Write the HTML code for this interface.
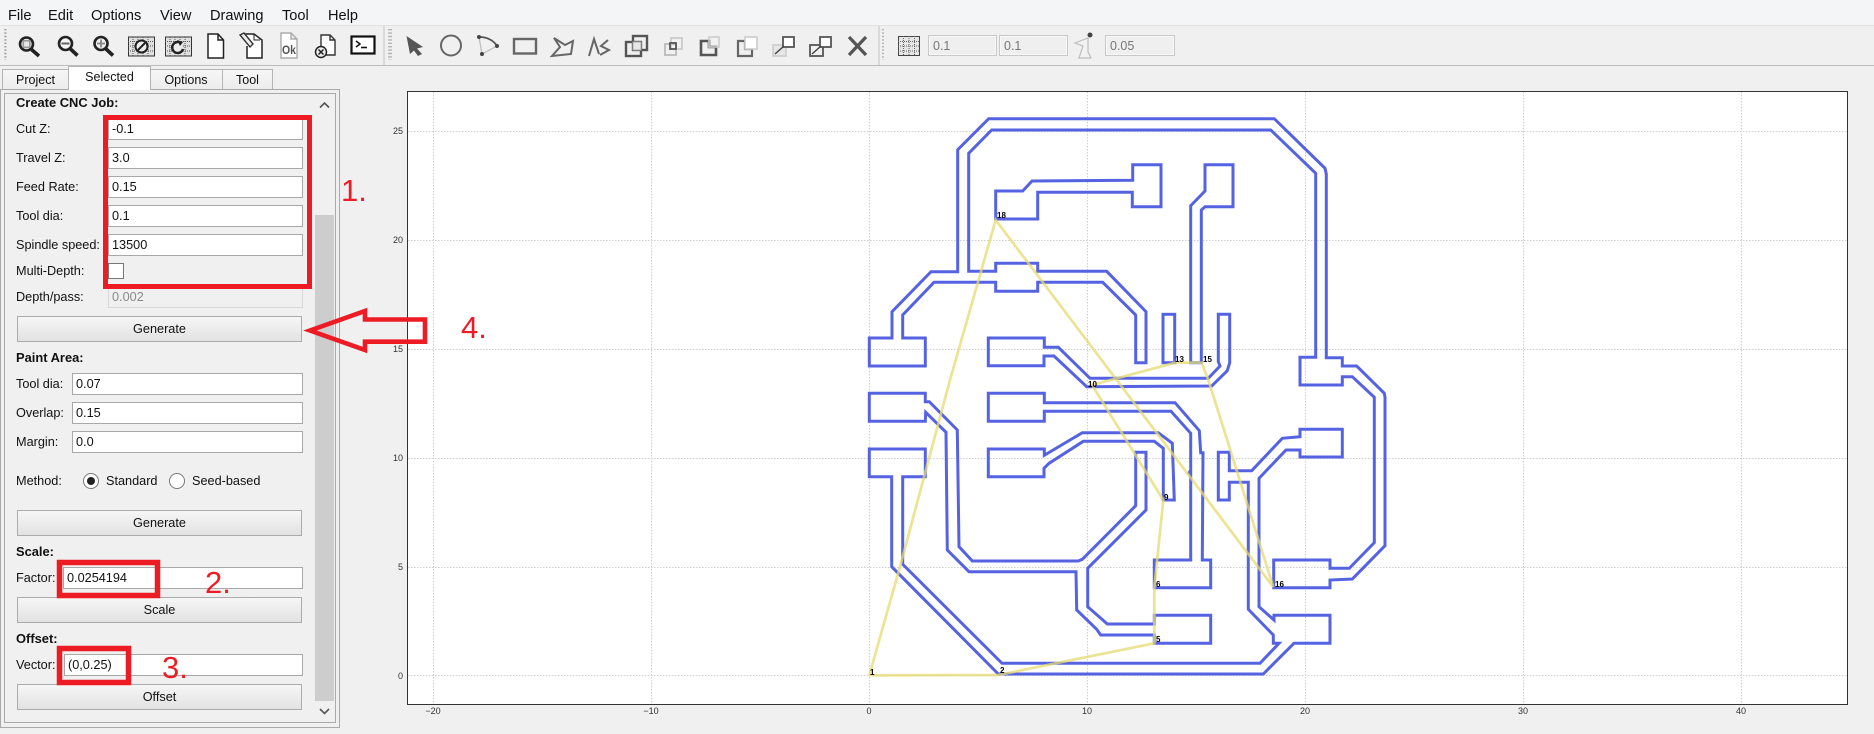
<!DOCTYPE html>
<html><head><meta charset="utf-8"><title>FlatCAM</title>
<style>
html,body{margin:0;padding:0;width:1874px;height:734px;overflow:hidden;background:#f0f0f0;font-family:"Liberation Sans",sans-serif;color:#1e1e1e}
div{position:absolute;box-sizing:border-box;white-space:nowrap}
svg{position:absolute;left:0;top:0}
.m{top:7px;height:18px;line-height:18px;font-size:14.6px;color:#111}
.l{left:16px;height:16px;line-height:16px;font-size:12.7px;color:#111}
.b{left:16px;height:16px;line-height:16px;font-size:12.9px;font-weight:bold;color:#111}
.i{background:#fff;border:1px solid #a8a8a8;height:22px;right:auto;padding-left:3px;line-height:20px;font-size:12.7px;color:#111}
.btn{left:17px;width:285px;height:26px;border:1px solid #ababab;background:linear-gradient(#f6f6f6,#e2e2e2);text-align:center;line-height:24px;font-size:12.7px;color:#111}
.tab{top:69px;height:21px;border:1px solid #b4b4b4;border-bottom:1px solid #b4b4b4;background:linear-gradient(#f6f6f6,#ececec);text-align:center;line-height:20px;font-size:12.5px;color:#111}
.r{color:#ed1c24;font-size:31px;line-height:34px;height:34px}
.tb{background:#efefef;border:1px solid #c8c8c8;outline:1px solid #f8f8f8;outline-offset:-2px;height:21px;top:35px;padding-left:4px;line-height:20px;font-size:12.5px;color:#777}
.ty{left:380px;width:23px;text-align:right;font:9px/12px "Liberation Sans",sans-serif;color:#333;height:12px}
.tx{top:705px;width:40px;text-align:center;font:9px/12px "Liberation Sans",sans-serif;color:#333;height:12px}
.n{font:bold 8px/9px "Liberation Sans",sans-serif;color:#000;height:9px}
</style></head><body>

<div style="left:0;top:0;width:1874px;height:25px;background:#f4f5f7"></div>
<div style="left:0;top:25px;width:1874px;height:1px;background:#dfe0e2"></div>
<div style="left:0;top:26px;width:1874px;height:39px;background:#f0f0f0"></div>
<div style="left:0;top:65px;width:1874px;height:1px;background:#bdbdbd"></div>

<div class="m" style="left:8px">File</div>
<div class="m" style="left:48px">Edit</div>
<div class="m" style="left:91px">Options</div>
<div class="m" style="left:160px">View</div>
<div class="m" style="left:210px">Drawing</div>
<div class="m" style="left:282px">Tool</div>
<div class="m" style="left:328px">Help</div>

<!-- toolbar icons -->
<svg width="1874" height="66" viewBox="0 0 1874 66" fill="none">
 <g stroke="#9a9a9a" stroke-width="1.4" stroke-dasharray="1.4 2">
  <path d="M5 29V60M5.8 29V60"/><path d="M389 29V60M391 29V60"/><path d="M883 29V60"/>
 </g>
 <path d="M384 26V65M879 26V65" stroke="#c4c4c4"/>
 <!-- magnifiers -->
 <g stroke="#222">
  <circle cx="26.5" cy="44" r="6.5" stroke-width="2.6" fill="#e8e8e8"/><rect x="23.3" y="40.8" width="6.5" height="6.5" stroke="#999" stroke-width="1.6"/><path d="M31.5 49.5L39 56" stroke-width="3.6"/>
  <circle cx="65.5" cy="43.5" r="6.5" stroke-width="2.6" fill="#f5f5f5"/><path d="M61.5 43.5H69.5" stroke="#666" stroke-width="2"/><path d="M70.5 49L77.5 55.5" stroke-width="3.6"/>
  <circle cx="101" cy="43.5" r="6.5" stroke-width="2.6" fill="#eee"/><path d="M97 43.5H105M101 39.5V47.5" stroke="#888" stroke-width="1.8"/><path d="M106 49L113 55.5" stroke-width="3.6"/>
 </g>
 <!-- grid squares -->
 <g>
  <rect x="128.5" y="37" width="26" height="19" fill="#e0e0e0" stroke="#333"/>
  <path d="M133 37V56M138 37V56M143 37V56M148 37V56M128 41.5H154M128 46H154M128 51H154" stroke="#555" stroke-dasharray="1 1"/>
  <circle cx="141.5" cy="46.5" r="6" fill="#eee" stroke="#222" stroke-width="2"/><path d="M138 50L145 43" stroke="#222" stroke-width="2"/>
  <rect x="165.5" y="37" width="26" height="19" fill="#e0e0e0" stroke="#333"/>
  <path d="M170 37V56M175 37V56M180 37V56M185 37V56M165 41.5H191M165 46H191M165 51H191" stroke="#555" stroke-dasharray="1 1"/>
  <path d="M181.5 43.5A5.5 5.5 0 1 0 183 49" stroke="#222" stroke-width="2.4" fill="#eee"/><path d="M177 40L183 42L180 46" fill="#222"/>
 </g>
 <!-- docs -->
 <path d="M208 34H218L223.5 40V58H208Z M218 34V40H223.5" stroke="#222" stroke-width="1.5" fill="#fff"/>
 <path d="M245 34H254L262 40V58H247V46" stroke="#222" stroke-width="1.5" fill="#fff"/><path d="M254 34V40H260" stroke="#222"/><path d="M240 35L244 33L253 44L250 47Z" stroke="#333" stroke-width="1.4" fill="#eee"/>
 <path d="M281 33H291L297 39V58H281Z M291 33V39H297" stroke="#aaa" stroke-width="1.4" fill="#fff"/><text x="282" y="54" font-family="Liberation Sans" font-weight="bold" font-size="12" fill="#555" textLength="14" lengthAdjust="spacingAndGlyphs">Ok</text>
 <path d="M321 35H330L335 40V55H321Z M330 35V40H335" stroke="#333" stroke-width="1.4" fill="#fff"/><circle cx="321" cy="52" r="5.5" stroke="#222" stroke-width="1.5" fill="#eee"/><path d="M318.5 49.5L323.5 54.5M323.5 49.5L318.5 54.5" stroke="#222" stroke-width="1.5"/>
 <rect x="351.5" y="36.5" width="23" height="17" stroke="#111" stroke-width="2.2" fill="#fff"/><path d="M356 41L360 44L356 47" stroke="#111" stroke-width="1.5"/><path d="M361 47.5H367" stroke="#111" stroke-width="1.6"/>
 <!-- draw tools -->
 <path d="M406.5 36L423 47L417 48.5L422 54L418 56L414 50.5L410 54Z" fill="#555"/>
 <circle cx="451" cy="45.5" r="10" stroke="#666" stroke-width="2"/>
 <path d="M479 37C488 37 494 41 497 46" stroke="#555" stroke-width="1.8"/><path d="M497 46L482 54L479 37" stroke="#bbb" stroke-width="1.2"/><g fill="#444"><circle cx="479" cy="37" r="2"/><circle cx="497" cy="46" r="2"/><circle cx="482" cy="54" r="2"/></g>
 <rect x="514" y="39" width="22" height="14.5" stroke="#666" stroke-width="2.4"/>
 <path d="M554 38L565 45L573 41L571 54L552 56L560 47Z" stroke="#666" stroke-width="2"/>
 <path d="M589 56L594 39L599 54M608 40L601 46L609 50L600 55" stroke="#666" stroke-width="2"/>
 <!-- boolean tools -->
 <g fill="none">
  <rect x="626" y="42" width="15" height="14" stroke="#555" stroke-width="2.4"/><rect x="633" y="36" width="14" height="14" stroke="#555" stroke-width="2.4"/><rect x="633" y="42" width="8" height="8" fill="#e8e8e8" stroke="#aaa"/>
  <rect x="665" y="44" width="11" height="11" stroke="#bbb" stroke-width="1.8"/><rect x="671" y="38" width="11" height="11" stroke="#ccc" stroke-width="1.8"/><rect x="670" y="43" width="6" height="6" stroke="#555" stroke-width="1.8"/>
  <path d="M701 41H709V47H716V55H701Z" stroke="#555" stroke-width="2.6"/><rect x="709" y="37" width="10" height="10" stroke="#ccc" stroke-width="1.6"/>
  <path d="M738 41H745V49H752V56H738Z" stroke="#666" stroke-width="2.2"/><rect x="745" y="37" width="12" height="12" fill="#fff" stroke="#ccc" stroke-width="1.6"/>
  <rect x="773" y="45" width="13" height="11" stroke="#ccc" stroke-width="1.6" fill="#e6e6e6"/><rect x="783" y="37" width="11" height="10" stroke="#555" stroke-width="1.8" fill="#fff"/><path d="M775 54L784 46" stroke="#444" stroke-width="1.5"/>
  <rect x="810" y="45" width="13" height="11" stroke="#555" stroke-width="1.8"/><rect x="820" y="37" width="11" height="10" stroke="#555" stroke-width="1.8" fill="#fff"/><path d="M812 54L821 46" stroke="#444" stroke-width="1.5"/>
  <path d="M849 37L866 55M866 37L849 55" stroke="#555" stroke-width="3.2"/>
 </g>
 <!-- grid icon -->
 <rect x="898.5" y="36.5" width="21" height="19" fill="#e6e6e6" stroke="#444"/>
 <path d="M903.5 36V56M909 36V56M914.5 36V56M898 41.5H920M898 46H920M898 51H920" stroke="#666" stroke-dasharray="1 1"/>
 <path d="M1075 43L1088 38V52L1091 58H1079L1083 46Z" stroke="#bdbdbd" stroke-width="1.2" fill="#f2f2f2"/><circle cx="1090" cy="35" r="2.5" fill="#444"/>
</svg>
<div class="tb" style="left:928px;width:69px">0.1</div>
<div class="tb" style="left:999px;width:69px">0.1</div>
<div class="tb" style="left:1105px;width:70px">0.05</div>

<!-- tabs -->
<div class="tab" style="left:2px;width:67px">Project</div>
<div class="tab" style="left:149px;width:74px">Options</div>
<div class="tab" style="left:222px;width:51px">Tool</div>
<div style="left:0;top:89px;width:340px;height:639px;border:1px solid #a9a9a9;background:#f0f0f0"></div>
<div class="tab" style="left:68px;width:83px;top:66px;height:24px;background:#fff;border-bottom:0;line-height:21px">Selected</div>
<div style="left:4px;top:93px;width:332px;height:630px;border:1px solid #a9a9a9;background:#f0f0f0"></div>

<!-- scrollbar -->
<div style="left:315px;top:94px;width:20px;height:628px;background:#f0f0f0"></div>
<div style="left:315px;top:215px;width:19px;height:486px;background:#cdcdcd"></div>
<svg width="340" height="734" fill="none" style="left:0;top:0">
 <path d="M320 107.5L324.5 103L329 107.5" stroke="#555" stroke-width="1.6"/>
 <path d="M320 709L324.5 713.5L329 709" stroke="#555" stroke-width="1.6"/>
</svg>

<!-- form -->
<div class="b" style="top:95px">Create CNC Job:</div>
<div class="l" style="top:121px">Cut Z:</div><div class="i" style="left:108px;top:118px;width:195px">-0.1</div>
<div class="l" style="top:150px">Travel Z:</div><div class="i" style="left:108px;top:147px;width:195px">3.0</div>
<div class="l" style="top:179px">Feed Rate:</div><div class="i" style="left:108px;top:176px;width:195px">0.15</div>
<div class="l" style="top:208px">Tool dia:</div><div class="i" style="left:108px;top:205px;width:195px">0.1</div>
<div class="l" style="top:237px">Spindle speed:</div><div class="i" style="left:108px;top:234px;width:195px">13500</div>
<div class="l" style="top:263px">Multi-Depth:</div><div style="left:108px;top:263px;width:16px;height:16px;background:#fff;border:1px solid #777"></div>
<div class="l" style="top:289px">Depth/pass:</div><div class="i" style="left:108px;top:286px;width:195px;background:#f0f0f0;border-color:#d8d8d8;color:#8a8a8a">0.002</div>
<div class="btn" style="top:316px">Generate</div>

<div class="b" style="top:350px">Paint Area:</div>
<div class="l" style="top:376px">Tool dia:</div><div class="i" style="left:72px;top:373px;width:231px">0.07</div>
<div class="l" style="top:405px">Overlap:</div><div class="i" style="left:72px;top:402px;width:231px">0.15</div>
<div class="l" style="top:434px">Margin:</div><div class="i" style="left:72px;top:431px;width:231px">0.0</div>
<div class="l" style="top:473px">Method:</div>
<div class="l" style="left:106px;top:473px">Standard</div>
<div class="l" style="left:192px;top:473px">Seed-based</div>
<svg width="200" height="500" style="left:0;top:0" fill="none">
 <circle cx="91" cy="481" r="7.5" fill="#fff" stroke="#777"/><circle cx="91" cy="481" r="4" fill="#222"/>
 <circle cx="177" cy="481" r="7.5" fill="#fff" stroke="#777"/>
</svg>
<div class="btn" style="top:510px">Generate</div>

<div class="b" style="top:544px">Scale:</div>
<div class="l" style="top:570px">Factor:</div><div class="i" style="left:63px;top:567px;width:240px">0.0254194</div>
<div class="btn" style="top:597px">Scale</div>

<div class="b" style="top:631px">Offset:</div>
<div class="l" style="top:657px">Vector:</div><div class="i" style="left:64px;top:654px;width:239px">(0,0.25)</div>
<div class="btn" style="top:684px">Offset</div>

<!-- plot -->
<div style="left:407px;top:91px;width:1441px;height:614px;background:#fff;border:1px solid #333"></div>
<svg width="1874" height="734" viewBox="0 0 1874 734" fill="none">
 <g stroke="#cfcfcf" stroke-dasharray="1.5 1.5">
  <path d="M433.5 92V704M651.5 92V704M869.5 92V704M1087.5 92V704M1305.5 92V704M1523.5 92V704M1741.5 92V704"/>
  <path d="M408 131.5H1847M408 240.5H1847M408 349.5H1847M408 458.5H1847M408 567.5H1847M408 675.5H1847"/>
 </g>
 <g stroke="#5563e2" stroke-width="3" stroke-linejoin="miter">
  <polygon points="892,338 892,311.7 931,271.7 957.7,271.7 957.7,149.7 988.7,118.7 1274.3,118.7 1325,168.3 1326.3,174 1326.3,357.7 1342.3,357.7 1342.3,366 1356.7,366 1384.3,393.3 1385,397 1385,545.7 1352.3,579 1330,580 1330,587.7 1273.7,587.7 1273.7,560 1330,560 1330,568.3 1349.3,568.3 1374.3,542.7 1374.3,397.3 1352.3,376.7 1342.3,376.7 1342.3,385 1300,385 1300,357.3 1315.7,357.3 1315.7,173.3 1270.7,130 991.7,130 968.7,153.3 968.7,271.3 995.7,271.3 995.7,263.3 1037.7,263.3 1037.7,271.3 1106.7,271.3 1146,311.7 1146,362.7 1135.7,362.7 1135.7,315 1102.7,282.3 1037.7,282.3 1037.7,291.3 995.7,291.3 995.7,282.3 934,282.3 902.7,315 902.7,338 925.3,338 925.3,366 869.3,366 869.3,338"/>
  <polygon points="995.7,191 1022.7,191 1032,181 1132.7,180.3 1132.7,164.7 1161,164.7 1161,206.7 1132.3,206.7 1132.3,192.3 1037.7,192.3 1037.7,219 995.7,219"/>
  <polygon points="1205,164.7 1233,164.7 1233,206.7 1205,206.7 1201.3,210 1201.3,362.7 1190.7,362.7 1190.7,205.7 1205,191"/>
  <rect x="1163" y="314.3" width="11.7" height="48.4"/>
  <polygon points="1218.3,314.3 1229.7,314.3 1229.7,362.7 1227.3,370.7 1211.7,386 1086.7,386.7 1054,356 1044,356 1044,365.7 988.3,365.7 988.3,338 1044.3,338 1044.3,347.3 1058.3,347.3 1090,378.3 1208.3,378.3 1220,366 1218.3,361.7"/>
  <polygon points="869.3,393.3 925.3,393.3 925.3,401.7 929.3,401.7 957.3,430 959,546.7 972.3,561 1078.3,561 1082.3,559.3 1135.7,505.7 1135.7,452.3 1146,452.3 1146,510 1087.7,568.3 1087.7,606.7 1107.3,624 1154.3,624 1154.3,615.3 1210.7,615.3 1210.7,643.3 1154.3,643.3 1154.3,635 1100.7,635 1096.7,629.3 1076.7,610 1076,571.7 969,571.7 947.3,550 946,432.3 925.7,412.3 925.3,421.3 869.3,421.3"/>
  <polygon points="869.3,449 925.3,449 925.3,476.7 902.7,476.7 902.7,564.3 1002,663.3 1260,663.3 1279,643.3 1273.3,643.3 1273.3,635 1248.3,609.3 1248.3,482.3 1229.3,482.3 1229.3,500 1218.3,500 1218.3,452.3 1229.3,452.3 1229.3,470.7 1251.7,470.7 1282.3,438.3 1300,436.7 1300,429.3 1342.3,429.3 1342.3,457 1300,457 1300,450 1286,450 1259,478.3 1259,606.7 1274,620 1274,615.3 1330,615.3 1330,643.3 1294,643.3 1263.3,674 998.3,674 891.7,566.7 891.7,476.7 869.3,476.7"/>
  <polygon points="988.3,393.3 1044.3,393.3 1044.3,402.7 1175,402.7 1199.3,430.7 1200.7,452.7 1203,452.7 1202.3,560 1210.7,560 1210.7,587.7 1154.3,587.7 1154.3,560 1190.7,560 1190.7,470 1188.3,474.3 1190.7,470 1190.7,433.3 1171,411.3 1044.3,411.3 1044.3,421.3 988.3,421.3"/>
  <polygon points="988.3,449 1044.3,449 1044.3,455.3 1082.3,432.7 1158.3,432.7 1172.3,443.3 1174.3,500 1163.3,500 1163.3,448.3 1154.3,441.3 1083.3,441.3 1049,463.3 1044,468.3 1044,476.7 988.3,476.7"/>
 </g>
 <polyline points="869.3,675.3 900,566.7 950,380 995.7,220 1273.3,587 1208.3,380 1201.7,362.7 1175,362.7 1092,385 1163.3,500 1154.3,587.7 1154.3,643.3 998.3,675 869.3,675.3" stroke="#e6da70" stroke-width="2.7" stroke-opacity=".75"/>
</svg>
<div class="n" style="left:870px;top:668px">1</div>
<div class="n" style="left:997px;top:211px">18</div>
<div class="n" style="left:1088px;top:380px">10</div>
<div class="n" style="left:1175px;top:355px">13</div>
<div class="n" style="left:1203px;top:355px">15</div>
<div class="n" style="left:1000px;top:666px">2</div>
<div class="n" style="left:1164px;top:493px">9</div>
<div class="n" style="left:1156px;top:580px">6</div>
<div class="n" style="left:1156px;top:635px">5</div>
<div class="n" style="left:1275px;top:580px">16</div>

<div class="ty" style="top:125px">25</div>
<div class="ty" style="top:234px">20</div>
<div class="ty" style="top:343px">15</div>
<div class="ty" style="top:452px">10</div>
<div class="ty" style="top:561px">5</div>
<div class="ty" style="top:670px">0</div>
<div class="tx" style="left:413px">−20</div>
<div class="tx" style="left:631px">−10</div>
<div class="tx" style="left:849px">0</div>
<div class="tx" style="left:1067px">10</div>
<div class="tx" style="left:1285px">20</div>
<div class="tx" style="left:1503px">30</div>
<div class="tx" style="left:1721px">40</div>

<!-- annotations -->
<svg width="600" height="734" fill="none" stroke="#ed1c24">
 <rect x="105.5" y="117.5" width="204" height="169" stroke-width="5"/>
 <rect x="59.5" y="562.5" width="98" height="33" stroke-width="5.5"/>
 <rect x="59.5" y="648.5" width="69" height="34" stroke-width="5.5"/>
 <polygon points="310,330.5 365,311 365,319.5 425,319.5 425,341.7 365,341.7 365,350" stroke-width="4.6"/>
</svg>
<div class="r" style="left:341px;top:174px">1.</div>
<div class="r" style="left:461px;top:311px">4.</div>
<div class="r" style="left:205px;top:566px">2.</div>
<div class="r" style="left:162px;top:651px">3.</div>
</body></html>
